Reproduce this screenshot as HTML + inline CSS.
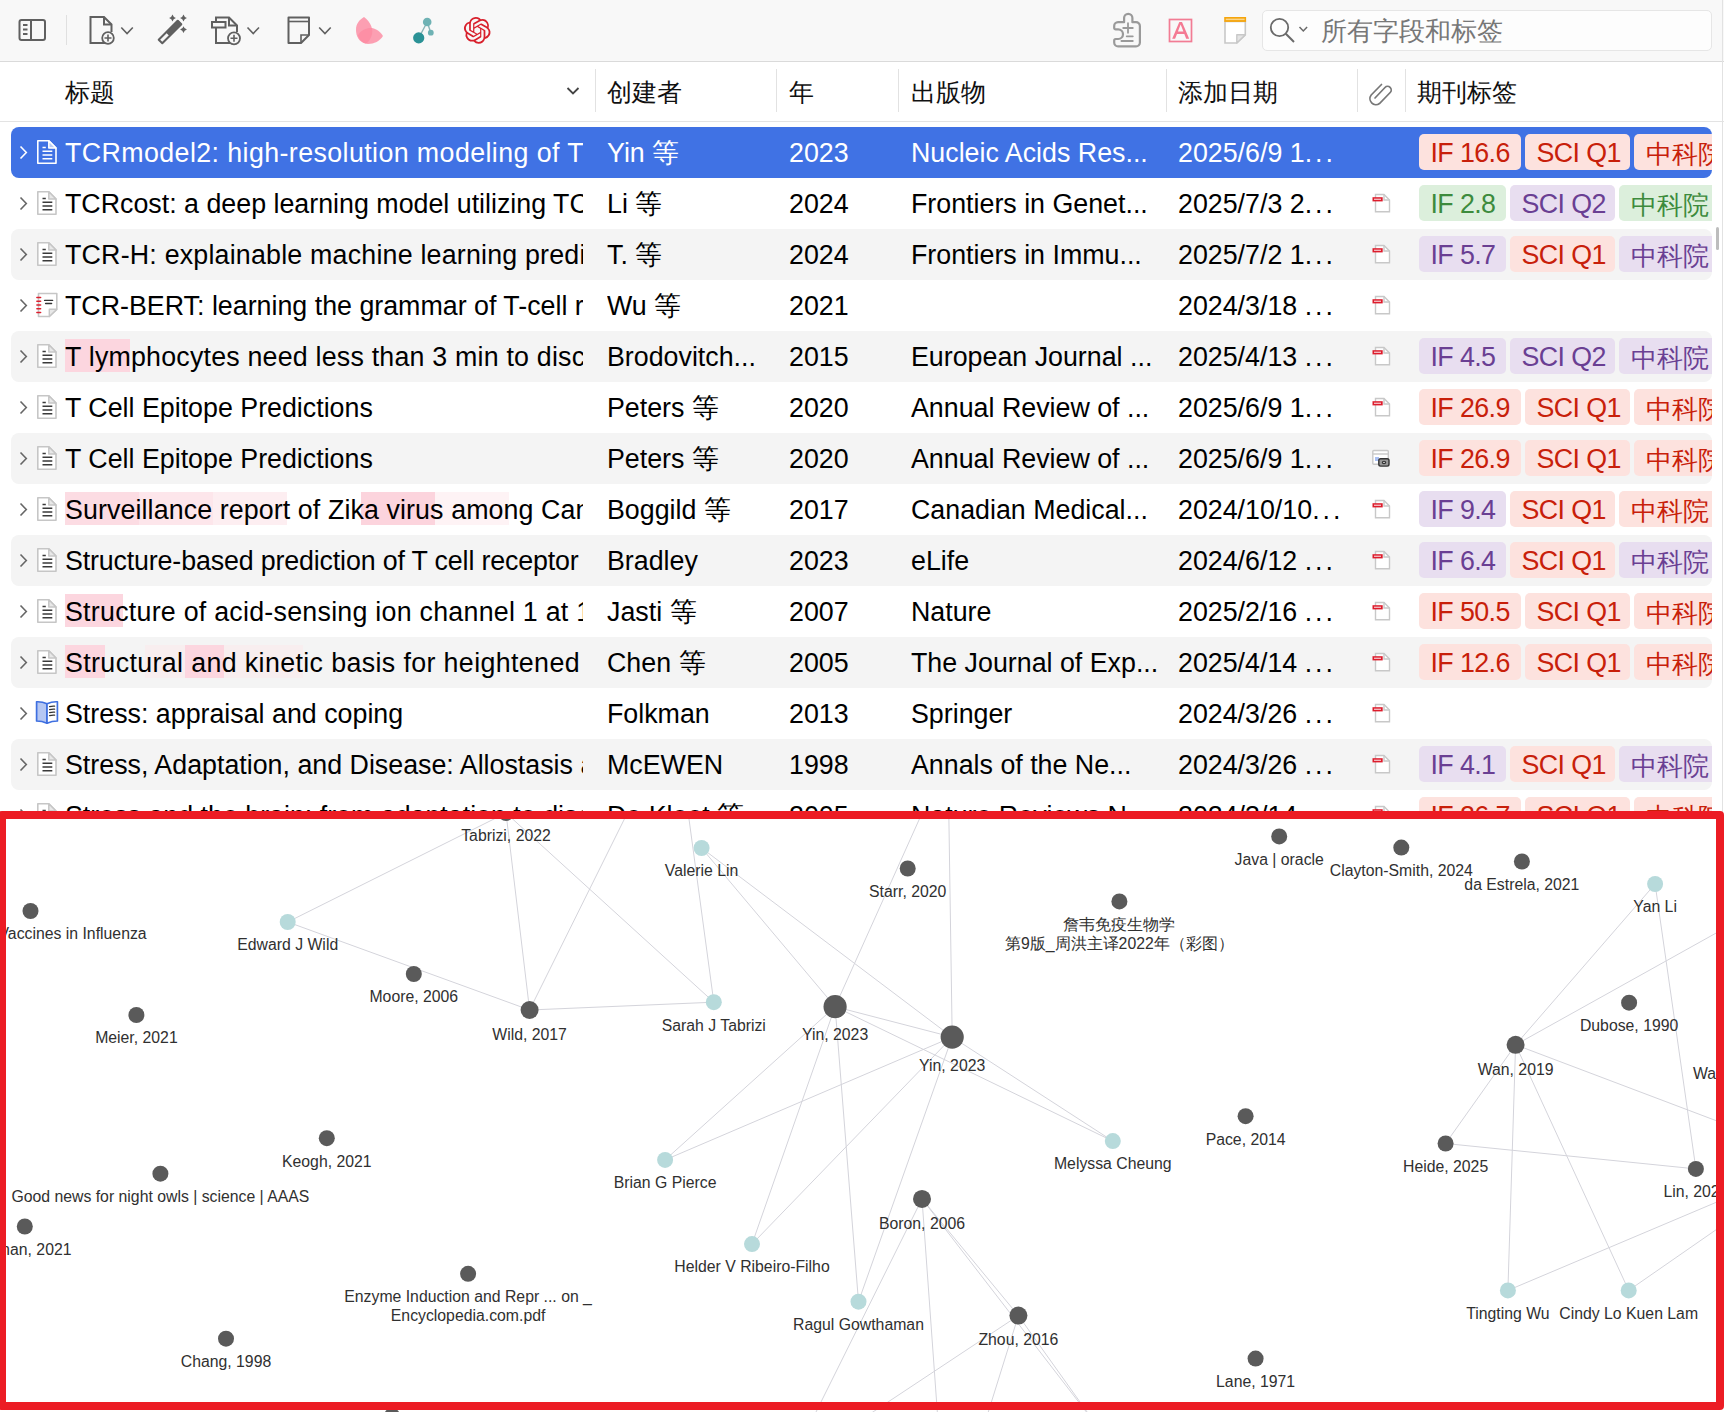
<!DOCTYPE html><html><head><meta charset="utf-8"><style>
*{margin:0;padding:0;box-sizing:border-box}
html,body{width:1724px;height:1412px;overflow:hidden;background:#fff;font-family:"Liberation Sans",sans-serif;color:#000}
.abs{position:absolute}
#tb{position:absolute;left:0;top:0;width:1724px;height:62px;background:#f8f8f8;border-bottom:1px solid #dadada}
#hd{position:absolute;left:0;top:62px;width:1724px;height:60px;background:#fff;border-bottom:1px solid #e3e3e3}
.hcol{position:absolute;top:0;height:59px;line-height:61px;font-size:25px;color:#111;white-space:nowrap}
.hdiv{position:absolute;top:7px;width:1px;height:43px;background:#e2e2e2}
.row{position:absolute;left:11px;width:1701px;height:51px;border-radius:8px}
.row.alt{background:#f4f4f4}
.row.sel{background:#4072e4;color:#fff}
.c{position:absolute;top:0;height:51px;line-height:53px;font-size:26.8px;white-space:nowrap;overflow:hidden}
.tag{position:absolute;top:7px;height:36px;line-height:38.5px;border-radius:5px;font-size:26.8px;padding-left:11.5px;white-space:nowrap;overflow:hidden;letter-spacing:-0.6px}
.tr{background:#fde2de;color:#c8200a}
.tg{background:#dcefdc;color:#3d8b3d}
.tp{background:#e8def0;color:#6a3f93}
.hl{position:absolute}
#graph{position:absolute;left:6px;top:819px;width:1718px;height:593px;background:#fff;overflow:hidden}
.lb{position:absolute;font-size:15.8px;color:#303030;white-space:nowrap;line-height:19px;text-align:center}
</style></head><body>
<div id="tb"></div>
<svg class="abs" style="left:0;top:0" width="1724" height="61" viewBox="0 0 1724 61">
<rect x="19.5" y="20" width="25.5" height="20" rx="2" fill="none" stroke="#606060" stroke-width="2"/>
<line x1="31" y1="20" x2="31" y2="40" stroke="#606060" stroke-width="2"/>
<line x1="23" y1="25" x2="27.5" y2="25" stroke="#606060" stroke-width="2"/>
<line x1="23" y1="29.5" x2="27.5" y2="29.5" stroke="#606060" stroke-width="2"/>
<line x1="23" y1="34" x2="27.5" y2="34" stroke="#606060" stroke-width="2"/>
<line x1="66.5" y1="15" x2="66.5" y2="45" stroke="#e0e0e0" stroke-width="1"/>
<path d="M106 43 H90.5 V17 H104 L111.5 24.5 V32" fill="none" stroke="#606060" stroke-width="2"/>
<path d="M104 17 V24.5 H111.5" fill="none" stroke="#606060" stroke-width="2"/>
<circle cx="108" cy="38" r="5.8" fill="#f8f8f8" stroke="#606060" stroke-width="1.8"/>
<path d="M108 34.5 V41.5 M104.5 38 H111.5" stroke="#606060" stroke-width="1.6"/>
<path d="M121.3 27.5 L127.05 33.5 L132.8 27.5" fill="none" stroke="#606060" stroke-width="1.6"/>
<path d="M158.7 39.7 L177.7 20.7 L181.3 24.3 L162.3 43.3 Z" fill="none" stroke="#606060" stroke-width="2" stroke-linejoin="round"/>
<path d="M166.3 32.1 L177.7 20.7 L181.3 24.3 L169.9 35.7 Z" fill="#606060" stroke="#606060" stroke-width="1.2" stroke-linejoin="round"/>
<path d="M172.5 14.6 Q173.248 17.252 175.9 18 Q173.248 18.748 172.5 21.4 Q171.752 18.748 169.1 18 Q171.752 17.252 172.5 14.6 Z" fill="#606060"/>
<path d="M183.5 14.6 Q184.248 17.252 186.9 18 Q184.248 18.748 183.5 21.4 Q182.752 18.748 180.1 18 Q182.752 17.252 183.5 14.6 Z" fill="#606060"/>
<path d="M183.5 26.200000000000003 Q184.248 28.852 186.9 29.6 Q184.248 30.348000000000003 183.5 33.0 Q182.752 30.348000000000003 180.1 29.6 Q182.752 28.852 183.5 26.200000000000003 Z" fill="#606060"/>
<path d="M230 43 H216 V17.5 H229 L237 25.5 V32" fill="none" stroke="#606060" stroke-width="2"/>
<path d="M229 17.5 V25.5 H237" fill="none" stroke="#606060" stroke-width="2"/>
<rect x="212" y="22" width="13.5" height="5.5" fill="#f8f8f8" stroke="#606060" stroke-width="2"/>
<circle cx="234" cy="38.3" r="6" fill="#f8f8f8" stroke="#606060" stroke-width="1.8"/>
<path d="M234 34.8 V41.8 M230.5 38.3 H237.5" stroke="#606060" stroke-width="1.6"/>
<path d="M247.5 27.5 L253.25 33.5 L259.0 27.5" fill="none" stroke="#606060" stroke-width="1.6"/>
<path d="M288.5 17.5 H309 V35 L301 43 H288.5 Z" fill="none" stroke="#606060" stroke-width="2" stroke-linejoin="round"/>
<line x1="288.5" y1="21.5" x2="309" y2="21.5" stroke="#606060" stroke-width="1.6"/>
<path d="M301 43 V35 H309" fill="none" stroke="#606060" stroke-width="1.6"/>
<path d="M319.2 27.5 L324.95 33.5 L330.7 27.5" fill="none" stroke="#606060" stroke-width="1.6"/>
<path d="M364 17 C371 22 374 30 371.5 36 C370 40 368 43 365.5 43.5 C359 42 356 36 356 30 C356 24 359 20 364 17 Z" fill="#fc8ba2" opacity="0.82"/>
<path d="M358 35.5 C361 29 368 27.5 372 28 C377 29 381 32.5 383 36 C380 41 374 44 368 44 C363 44 359.5 40 358 35.5 Z" fill="#fc8ba2" opacity="0.82"/>
<line x1="419" y1="37.5" x2="427.2" y2="22" stroke="#8ab4b6" stroke-width="1.4"/>
<line x1="427.2" y1="22" x2="430.8" y2="32.7" stroke="#8ab4b6" stroke-width="1.4"/>
<circle cx="427.2" cy="22" r="4.3" fill="#6fb2b4"/>
<circle cx="430.8" cy="32.7" r="2.9" fill="#6fb2b4"/>
<circle cx="418.7" cy="37.9" r="5.6" fill="#2b9296"/>
<path transform="translate(463.9 17) scale(1.11)" fill="#d8202c" d="M22.2819 9.8211a5.9847 5.9847 0 0 0-.5157-4.9108 6.0462 6.0462 0 0 0-6.5098-2.9A6.0651 6.0651 0 0 0 4.9807 4.1818a5.9847 5.9847 0 0 0-3.9977 2.9 6.0462 6.0462 0 0 0 .7427 7.0966 5.98 5.98 0 0 0 .511 4.9107 6.051 6.051 0 0 0 6.5146 2.9001A5.9847 5.9847 0 0 0 13.2599 24a6.0557 6.0557 0 0 0 5.7718-4.2058 5.9894 5.9894 0 0 0 3.9977-2.9001 6.0557 6.0557 0 0 0-.7475-7.0729zm-9.022 12.6081a4.4755 4.4755 0 0 1-2.8764-1.0408l.1419-.0804 4.7783-2.7582a.7948.7948 0 0 0 .3927-.6813v-6.7369l2.02 1.1686a.071.071 0 0 1 .038.052v5.5826a4.504 4.504 0 0 1-4.4945 4.4944zm-9.6607-4.1254a4.4708 4.4708 0 0 1-.5346-3.0137l.142.0852 4.783 2.7582a.7712.7712 0 0 0 .7806 0l5.8428-3.3685v2.3324a.0804.0804 0 0 1-.0332.0615L9.74 19.9502a4.4992 4.4992 0 0 1-6.1408-1.6464zM2.3408 7.8956a4.485 4.485 0 0 1 2.3655-1.9728V11.6a.7664.7664 0 0 0 .3879.6765l5.8144 3.3543-2.0201 1.1685a.0757.0757 0 0 1-.071 0l-4.8303-2.7865A4.504 4.504 0 0 1 2.3408 7.872zm16.5963 3.8558L13.1038 8.364 15.1192 7.2a.0757.0757 0 0 1 .071 0l4.8303 2.7913a4.4944 4.4944 0 0 1-.6765 8.1042v-5.6772a.79.79 0 0 0-.407-.667zm2.0107-3.0231l-.142-.0852-4.7735-2.7818a.7759.7759 0 0 0-.7854 0L9.409 9.2297V6.8974a.0662.0662 0 0 1 .0284-.0615l4.8303-2.7866a4.4992 4.4992 0 0 1 6.6802 4.66zM8.3065 12.863l-2.02-1.1638a.0804.0804 0 0 1-.038-.0567V6.0742a4.4992 4.4992 0 0 1 7.3757-3.4537l-.142.0805L8.704 5.459a.7948.7948 0 0 0-.3927.6813zm1.0976-2.3654l2.602-1.4998 2.6069 1.4998v2.9994l-2.5974 1.4997-2.6067-1.4997Z"/>
<path d="M1118 22.2 H1124.1 V18 A4.15 4.15 0 0 1 1132.4 18 V22.2 H1136 A3.9 3.9 0 0 1 1139.9 26.1 V42.4 A3.9 3.9 0 0 1 1136 46.3 H1118.1 A3.9 3.9 0 0 1 1114.2 42.4 V40.5 A1.5 1.5 0 0 1 1115.7 39 H1118.2 A4.8 4.8 0 0 0 1118.2 29.4 H1115.7 A1.5 1.5 0 0 1 1114.2 27.9 V26.1 A3.9 3.9 0 0 1 1118 22.2 Z" fill="none" stroke="#9a9a9a" stroke-width="2.2" stroke-linejoin="round"/>
<path d="M1128 23.2 V32.8 M1123.2 28 H1132.8 M1126.7 36.3 H1132.8 M1121.4 41 H1132.8" stroke="#9a9a9a" stroke-width="1.8" stroke-linecap="round"/>
<rect x="1169.5" y="19.5" width="22" height="22" fill="none" stroke="#f27c94" stroke-width="1.7"/>
<path fill-rule="evenodd" fill="#f47a93" d="M1172.2 38.8 L1179.3 22 H1182 L1189.2 38.8 H1186.2 L1184.3 34 H1177 L1175.1 38.8 Z M1177.9 31.4 H1183.4 L1180.65 24.6 Z"/>
<path d="M1225 21.5 H1245.3 V34.8 L1236.8 43 H1225 Z" fill="#fff" stroke="#c8c8c8" stroke-width="1.6"/>
<rect x="1224.2" y="17" width="21.9" height="4.9" fill="#f5a50d"/>
<rect x="1225.8" y="18.6" width="18.8" height="1.5" fill="#fad58a"/>
<path d="M1236.8 43 V34.8 H1245.3 Z" fill="#e4e4e4" stroke="#c8c8c8" stroke-width="1.4" stroke-linejoin="round"/>
</svg>
<div class="abs" style="left:1262px;top:9.5px;width:450px;height:41px;border:1px solid #e6e6e6;border-radius:5px;background:#fdfdfd"></div>
<svg class="abs" style="left:1260px;top:10px" width="60" height="40" viewBox="1260 10 60 40">
<circle cx="1279.5" cy="27.5" r="8.7" fill="none" stroke="#6a6a6a" stroke-width="1.8"/>
<line x1="1285.8" y1="33.8" x2="1294" y2="42" stroke="#6a6a6a" stroke-width="2"/>
<path d="M1299.5 27 L1303.3 31 L1307.1 27" fill="none" stroke="#6a6a6a" stroke-width="1.5"/>
</svg>
<div class="abs" style="left:1321px;top:11px;height:40px;line-height:40px;font-size:25.6px;color:#777;white-space:nowrap">所有字段和标签</div>
<div id="hd">
<div class="hcol" style="left:65px">标题</div>
<div class="hcol" style="left:607px">创建者</div>
<div class="hcol" style="left:789px">年</div>
<div class="hcol" style="left:911px">出版物</div>
<div class="hcol" style="left:1178px">添加日期</div>
<div class="hcol" style="left:1417px">期刊标签</div>
<div class="hdiv" style="left:595px"></div>
<div class="hdiv" style="left:776px"></div>
<div class="hdiv" style="left:898px"></div>
<div class="hdiv" style="left:1166px"></div>
<div class="hdiv" style="left:1357px"></div>
<div class="hdiv" style="left:1405px"></div>
</div>
<svg class="abs" style="left:560px;top:80px" width="40" height="30"><path d="M7.5 8 L13 13.5 L18.5 8" fill="none" stroke="#444" stroke-width="1.8"/></svg>
<svg class="abs" style="left:1365px;top:78px" width="32" height="32" viewBox="0 0 32 32"><path d="M9 20 L19 9.5 A3.6 3.6 0 0 1 24.2 14.5 L13.5 25.5 A6 6 0 0 1 5.2 17 L15.5 6.5" fill="none" stroke="#777" stroke-width="1.7" stroke-linecap="round" transform="translate(1 0)"/></svg>
<div class="row sel" style="top:127px"></div>
<svg class="abs" style="left:17px;top:144px" width="14" height="18"><path d="M3.5 2.5 L9.3 8.5 L3.5 14.5" fill="none" stroke="#fff" stroke-width="1.6"/></svg>
<svg class="abs" style="left:36px;top:139px" width="22" height="26" viewBox="0 0 22 26"><path d="M1.8 1.8 H12.8 L20 9 V24.2 H1.8 Z" fill="none" stroke="#fff" stroke-width="1.6" stroke-linejoin="round"/><path d="M12.8 1.8 V9 H20 Z" fill="#b9ccf5" stroke="#fff" stroke-width="1.5" stroke-linejoin="round"/><path d="M6.5 8.6 H9.8 M6.5 12.3 H16.3 M6.5 16 H16.3 M6.5 19.7 H16.3" stroke="#fff" stroke-width="1.5"/></svg>
<div class="c" style="left:65px;top:127px;width:518px;color:#fff;letter-spacing:0.4px">TCRmodel2: high-resolution modeling of T</div>
<div class="c" style="left:607px;top:127px;width:165px;color:#fff">Yin 等</div>
<div class="c" style="left:789px;top:127px;width:105px;color:#fff">2023</div>
<div class="c" style="left:911px;top:127px;width:250px;color:#fff">Nucleic Acids Res...</div>
<div class="c" style="left:1178px;top:127px;width:175px;color:#fff">2025/6/9 1<span style="letter-spacing:3px">...</span></div>

<div class="abs" style="left:1419px;top:127px;width:293px;height:51px;overflow:hidden">
<div class="tag tr" style="left:0px;width:102px">IF 16.6</div>
<div class="tag tr" style="left:106px;width:105px">SCI Q1</div>
<div class="tag tr" style="left:215px;width:100px;font-size:25.8px;line-height:40.5px;letter-spacing:0">中科院</div>
</div>
<div class="row" style="top:178px"></div>
<svg class="abs" style="left:17px;top:195px" width="14" height="18"><path d="M3.5 2.5 L9.3 8.5 L3.5 14.5" fill="none" stroke="#666" stroke-width="1.6"/></svg>
<svg class="abs" style="left:36px;top:190px" width="22" height="26" viewBox="0 0 22 26"><path d="M1.8 1.8 H12.8 L20 9 V24.2 H1.8 Z" fill="#fff" stroke="#c6c6c6" stroke-width="1.6" stroke-linejoin="round"/><path d="M12.8 1.8 V9 H20 Z" fill="#e8e8e8" stroke="#c6c6c6" stroke-width="1.5" stroke-linejoin="round"/><path d="M6.5 8.6 H9.8 M6.5 12.3 H16.3 M6.5 16 H16.3 M6.5 19.7 H16.3" stroke="#3a3a3a" stroke-width="1.5"/></svg>
<div class="c" style="left:65px;top:178px;width:518px;color:#000;letter-spacing:0px">TCRcost: a deep learning model utilizing TC</div>
<div class="c" style="left:607px;top:178px;width:165px;color:#000">Li 等</div>
<div class="c" style="left:789px;top:178px;width:105px;color:#000">2024</div>
<div class="c" style="left:911px;top:178px;width:250px;color:#000">Frontiers in Genet...</div>
<div class="c" style="left:1178px;top:178px;width:175px;color:#000">2025/7/3 2<span style="letter-spacing:3px">...</span></div>
<svg class="abs" style="left:1370px;top:192px" width="24" height="24" viewBox="0 0 24 24"><path d="M5.5 2.5 H14 L19.5 8 V19.8 H5.5 Z" fill="#fff" stroke="#c8c8c8" stroke-width="1.4"/><path d="M14 2.5 V8 H19.5" fill="none" stroke="#c8c8c8" stroke-width="1.4"/><rect x="2.5" y="5.2" width="10.2" height="4.2" fill="#dd1c2c"/><rect x="4" y="6.6" width="7" height="1.4" fill="#f3b4ba"/></svg>
<div class="abs" style="left:1419px;top:178px;width:293px;height:51px;overflow:hidden">
<div class="tag tg" style="left:0px;width:87px">IF 2.8</div>
<div class="tag tp" style="left:91px;width:105px">SCI Q2</div>
<div class="tag tg" style="left:200px;width:100px;font-size:25.8px;line-height:40.5px;letter-spacing:0">中科院</div>
</div>
<div class="row alt" style="top:229px"></div>
<svg class="abs" style="left:17px;top:246px" width="14" height="18"><path d="M3.5 2.5 L9.3 8.5 L3.5 14.5" fill="none" stroke="#666" stroke-width="1.6"/></svg>
<svg class="abs" style="left:36px;top:241px" width="22" height="26" viewBox="0 0 22 26"><path d="M1.8 1.8 H12.8 L20 9 V24.2 H1.8 Z" fill="#fff" stroke="#c6c6c6" stroke-width="1.6" stroke-linejoin="round"/><path d="M12.8 1.8 V9 H20 Z" fill="#e8e8e8" stroke="#c6c6c6" stroke-width="1.5" stroke-linejoin="round"/><path d="M6.5 8.6 H9.8 M6.5 12.3 H16.3 M6.5 16 H16.3 M6.5 19.7 H16.3" stroke="#3a3a3a" stroke-width="1.5"/></svg>
<div class="c" style="left:65px;top:229px;width:518px;color:#000;letter-spacing:0.2px">TCR-H: explainable machine learning predi</div>
<div class="c" style="left:607px;top:229px;width:165px;color:#000">T. 等</div>
<div class="c" style="left:789px;top:229px;width:105px;color:#000">2024</div>
<div class="c" style="left:911px;top:229px;width:250px;color:#000">Frontiers in Immu...</div>
<div class="c" style="left:1178px;top:229px;width:175px;color:#000">2025/7/2 1<span style="letter-spacing:3px">...</span></div>
<svg class="abs" style="left:1370px;top:243px" width="24" height="24" viewBox="0 0 24 24"><path d="M5.5 2.5 H14 L19.5 8 V19.8 H5.5 Z" fill="#fff" stroke="#c8c8c8" stroke-width="1.4"/><path d="M14 2.5 V8 H19.5" fill="none" stroke="#c8c8c8" stroke-width="1.4"/><rect x="2.5" y="5.2" width="10.2" height="4.2" fill="#dd1c2c"/><rect x="4" y="6.6" width="7" height="1.4" fill="#f3b4ba"/></svg>
<div class="abs" style="left:1419px;top:229px;width:293px;height:51px;overflow:hidden">
<div class="tag tp" style="left:0px;width:87px">IF 5.7</div>
<div class="tag tr" style="left:91px;width:105px">SCI Q1</div>
<div class="tag tp" style="left:200px;width:100px;font-size:25.8px;line-height:40.5px;letter-spacing:0">中科院</div>
</div>
<div class="row" style="top:280px"></div>
<svg class="abs" style="left:17px;top:297px" width="14" height="18"><path d="M3.5 2.5 L9.3 8.5 L3.5 14.5" fill="none" stroke="#666" stroke-width="1.6"/></svg>
<svg class="abs" style="left:36px;top:292px" width="22" height="26" viewBox="0 0 22 26"><path d="M2.5 1.5 H20.8 V17.3 L13.3 24.5 H2.5 Z" fill="#fff" stroke="#c6c6c6" stroke-width="1.6" stroke-linejoin="round"/><path d="M13.3 24.5 V17.3 H20.8 Z" fill="#e8e8e8" stroke="#c6c6c6" stroke-width="1.4" stroke-linejoin="round"/><path d="M0.9 5.5 H4.6" stroke="#dc1f2e" stroke-width="1.6" stroke-linecap="round"/><path d="M0.9 9.25 H4.6" stroke="#dc1f2e" stroke-width="1.6" stroke-linecap="round"/><path d="M0.9 13 H4.6" stroke="#dc1f2e" stroke-width="1.6" stroke-linecap="round"/><path d="M0.9 16.75 H4.6" stroke="#dc1f2e" stroke-width="1.6" stroke-linecap="round"/><path d="M0.9 20.5 H4.6" stroke="#dc1f2e" stroke-width="1.6" stroke-linecap="round"/><path d="M8.6 8.4 H16.6 M9.6 11.5 H15.6" stroke="#333" stroke-width="1.4" stroke-linecap="round"/></svg>
<div class="c" style="left:65px;top:280px;width:518px;color:#000;letter-spacing:0px">TCR-BERT: learning the grammar of T-cell r</div>
<div class="c" style="left:607px;top:280px;width:165px;color:#000">Wu 等</div>
<div class="c" style="left:789px;top:280px;width:105px;color:#000">2021</div>
<div class="c" style="left:911px;top:280px;width:250px;color:#000"></div>
<div class="c" style="left:1178px;top:280px;width:175px;color:#000">2024/3/18 <span style="letter-spacing:3px">...</span></div>
<svg class="abs" style="left:1370px;top:294px" width="24" height="24" viewBox="0 0 24 24"><path d="M5.5 2.5 H14 L19.5 8 V19.8 H5.5 Z" fill="#fff" stroke="#c8c8c8" stroke-width="1.4"/><path d="M14 2.5 V8 H19.5" fill="none" stroke="#c8c8c8" stroke-width="1.4"/><rect x="2.5" y="5.2" width="10.2" height="4.2" fill="#dd1c2c"/><rect x="4" y="6.6" width="7" height="1.4" fill="#f3b4ba"/></svg>
<div class="abs" style="left:1419px;top:280px;width:293px;height:51px;overflow:hidden">
</div>
<div class="row alt" style="top:331px"></div>
<div class="hl" style="left:65px;top:339px;width:65px;height:33px;background:#fcd6df"></div>
<svg class="abs" style="left:17px;top:348px" width="14" height="18"><path d="M3.5 2.5 L9.3 8.5 L3.5 14.5" fill="none" stroke="#666" stroke-width="1.6"/></svg>
<svg class="abs" style="left:36px;top:343px" width="22" height="26" viewBox="0 0 22 26"><path d="M1.8 1.8 H12.8 L20 9 V24.2 H1.8 Z" fill="#fff" stroke="#c6c6c6" stroke-width="1.6" stroke-linejoin="round"/><path d="M12.8 1.8 V9 H20 Z" fill="#e8e8e8" stroke="#c6c6c6" stroke-width="1.5" stroke-linejoin="round"/><path d="M6.5 8.6 H9.8 M6.5 12.3 H16.3 M6.5 16 H16.3 M6.5 19.7 H16.3" stroke="#3a3a3a" stroke-width="1.5"/></svg>
<div class="c" style="left:65px;top:331px;width:518px;color:#000;letter-spacing:0.2px">T lymphocytes need less than 3 min to disc</div>
<div class="c" style="left:607px;top:331px;width:165px;color:#000">Brodovitch...</div>
<div class="c" style="left:789px;top:331px;width:105px;color:#000">2015</div>
<div class="c" style="left:911px;top:331px;width:250px;color:#000">European Journal ...</div>
<div class="c" style="left:1178px;top:331px;width:175px;color:#000">2025/4/13 <span style="letter-spacing:3px">...</span></div>
<svg class="abs" style="left:1370px;top:345px" width="24" height="24" viewBox="0 0 24 24"><path d="M5.5 2.5 H14 L19.5 8 V19.8 H5.5 Z" fill="#fff" stroke="#c8c8c8" stroke-width="1.4"/><path d="M14 2.5 V8 H19.5" fill="none" stroke="#c8c8c8" stroke-width="1.4"/><rect x="2.5" y="5.2" width="10.2" height="4.2" fill="#dd1c2c"/><rect x="4" y="6.6" width="7" height="1.4" fill="#f3b4ba"/></svg>
<div class="abs" style="left:1419px;top:331px;width:293px;height:51px;overflow:hidden">
<div class="tag tp" style="left:0px;width:87px">IF 4.5</div>
<div class="tag tp" style="left:91px;width:105px">SCI Q2</div>
<div class="tag tp" style="left:200px;width:100px;font-size:25.8px;line-height:40.5px;letter-spacing:0">中科院</div>
</div>
<div class="row" style="top:382px"></div>
<svg class="abs" style="left:17px;top:399px" width="14" height="18"><path d="M3.5 2.5 L9.3 8.5 L3.5 14.5" fill="none" stroke="#666" stroke-width="1.6"/></svg>
<svg class="abs" style="left:36px;top:394px" width="22" height="26" viewBox="0 0 22 26"><path d="M1.8 1.8 H12.8 L20 9 V24.2 H1.8 Z" fill="#fff" stroke="#c6c6c6" stroke-width="1.6" stroke-linejoin="round"/><path d="M12.8 1.8 V9 H20 Z" fill="#e8e8e8" stroke="#c6c6c6" stroke-width="1.5" stroke-linejoin="round"/><path d="M6.5 8.6 H9.8 M6.5 12.3 H16.3 M6.5 16 H16.3 M6.5 19.7 H16.3" stroke="#3a3a3a" stroke-width="1.5"/></svg>
<div class="c" style="left:65px;top:382px;width:518px;color:#000;letter-spacing:0px">T Cell Epitope Predictions</div>
<div class="c" style="left:607px;top:382px;width:165px;color:#000">Peters 等</div>
<div class="c" style="left:789px;top:382px;width:105px;color:#000">2020</div>
<div class="c" style="left:911px;top:382px;width:250px;color:#000">Annual Review of ...</div>
<div class="c" style="left:1178px;top:382px;width:175px;color:#000">2025/6/9 1<span style="letter-spacing:3px">...</span></div>
<svg class="abs" style="left:1370px;top:396px" width="24" height="24" viewBox="0 0 24 24"><path d="M5.5 2.5 H14 L19.5 8 V19.8 H5.5 Z" fill="#fff" stroke="#c8c8c8" stroke-width="1.4"/><path d="M14 2.5 V8 H19.5" fill="none" stroke="#c8c8c8" stroke-width="1.4"/><rect x="2.5" y="5.2" width="10.2" height="4.2" fill="#dd1c2c"/><rect x="4" y="6.6" width="7" height="1.4" fill="#f3b4ba"/></svg>
<div class="abs" style="left:1419px;top:382px;width:293px;height:51px;overflow:hidden">
<div class="tag tr" style="left:0px;width:102px">IF 26.9</div>
<div class="tag tr" style="left:106px;width:105px">SCI Q1</div>
<div class="tag tr" style="left:215px;width:100px;font-size:25.8px;line-height:40.5px;letter-spacing:0">中科院</div>
</div>
<div class="row alt" style="top:433px"></div>
<svg class="abs" style="left:17px;top:450px" width="14" height="18"><path d="M3.5 2.5 L9.3 8.5 L3.5 14.5" fill="none" stroke="#666" stroke-width="1.6"/></svg>
<svg class="abs" style="left:36px;top:445px" width="22" height="26" viewBox="0 0 22 26"><path d="M1.8 1.8 H12.8 L20 9 V24.2 H1.8 Z" fill="#fff" stroke="#c6c6c6" stroke-width="1.6" stroke-linejoin="round"/><path d="M12.8 1.8 V9 H20 Z" fill="#e8e8e8" stroke="#c6c6c6" stroke-width="1.5" stroke-linejoin="round"/><path d="M6.5 8.6 H9.8 M6.5 12.3 H16.3 M6.5 16 H16.3 M6.5 19.7 H16.3" stroke="#3a3a3a" stroke-width="1.5"/></svg>
<div class="c" style="left:65px;top:433px;width:518px;color:#000;letter-spacing:0px">T Cell Epitope Predictions</div>
<div class="c" style="left:607px;top:433px;width:165px;color:#000">Peters 等</div>
<div class="c" style="left:789px;top:433px;width:105px;color:#000">2020</div>
<div class="c" style="left:911px;top:433px;width:250px;color:#000">Annual Review of ...</div>
<div class="c" style="left:1178px;top:433px;width:175px;color:#000">2025/6/9 1<span style="letter-spacing:3px">...</span></div>
<svg class="abs" style="left:1370px;top:447px" width="24" height="24" viewBox="0 0 24 24"><rect x="2.8" y="3.5" width="15.5" height="13.8" rx="1" fill="#fff" stroke="#c8c8c8" stroke-width="1.4"/><line x1="2.8" y1="7" x2="18.3" y2="7" stroke="#c8c8c8" stroke-width="1.4"/><rect x="5" y="10" width="4" height="4" fill="#a9c0f3"/><rect x="8.8" y="11.8" width="10.2" height="7.3" rx="1.8" fill="#999" stroke="#333" stroke-width="1.4"/><ellipse cx="14" cy="15.4" rx="1.7" ry="1.2" fill="#bbb" stroke="#333" stroke-width="1.1"/></svg>
<div class="abs" style="left:1419px;top:433px;width:293px;height:51px;overflow:hidden">
<div class="tag tr" style="left:0px;width:102px">IF 26.9</div>
<div class="tag tr" style="left:106px;width:105px">SCI Q1</div>
<div class="tag tr" style="left:215px;width:100px;font-size:25.8px;line-height:40.5px;letter-spacing:0">中科院</div>
</div>
<div class="row" style="top:484px"></div>
<div class="hl" style="left:65px;top:492px;width:74px;height:33px;background:#fcdce3"></div>
<div class="hl" style="left:139px;top:492px;width:74px;height:33px;background:#fde6eb"></div>
<div class="hl" style="left:213px;top:492px;width:74px;height:33px;background:#fdeef1"></div>
<div class="hl" style="left:361px;top:492px;width:74px;height:33px;background:#fcd4dd"></div>
<div class="hl" style="left:435px;top:492px;width:74px;height:33px;background:#fef3f5"></div>
<svg class="abs" style="left:17px;top:501px" width="14" height="18"><path d="M3.5 2.5 L9.3 8.5 L3.5 14.5" fill="none" stroke="#666" stroke-width="1.6"/></svg>
<svg class="abs" style="left:36px;top:496px" width="22" height="26" viewBox="0 0 22 26"><path d="M1.8 1.8 H12.8 L20 9 V24.2 H1.8 Z" fill="#fff" stroke="#c6c6c6" stroke-width="1.6" stroke-linejoin="round"/><path d="M12.8 1.8 V9 H20 Z" fill="#e8e8e8" stroke="#c6c6c6" stroke-width="1.5" stroke-linejoin="round"/><path d="M6.5 8.6 H9.8 M6.5 12.3 H16.3 M6.5 16 H16.3 M6.5 19.7 H16.3" stroke="#3a3a3a" stroke-width="1.5"/></svg>
<div class="c" style="left:65px;top:484px;width:518px;color:#000;letter-spacing:0.1px">Surveillance report of Zika virus among Canadian</div>
<div class="c" style="left:607px;top:484px;width:165px;color:#000">Boggild 等</div>
<div class="c" style="left:789px;top:484px;width:105px;color:#000">2017</div>
<div class="c" style="left:911px;top:484px;width:250px;color:#000">Canadian Medical...</div>
<div class="c" style="left:1178px;top:484px;width:175px;color:#000">2024/10/10<span style="letter-spacing:3px">...</span></div>
<svg class="abs" style="left:1370px;top:498px" width="24" height="24" viewBox="0 0 24 24"><path d="M5.5 2.5 H14 L19.5 8 V19.8 H5.5 Z" fill="#fff" stroke="#c8c8c8" stroke-width="1.4"/><path d="M14 2.5 V8 H19.5" fill="none" stroke="#c8c8c8" stroke-width="1.4"/><rect x="2.5" y="5.2" width="10.2" height="4.2" fill="#dd1c2c"/><rect x="4" y="6.6" width="7" height="1.4" fill="#f3b4ba"/></svg>
<div class="abs" style="left:1419px;top:484px;width:293px;height:51px;overflow:hidden">
<div class="tag tp" style="left:0px;width:87px">IF 9.4</div>
<div class="tag tr" style="left:91px;width:105px">SCI Q1</div>
<div class="tag tr" style="left:200px;width:100px;font-size:25.8px;line-height:40.5px;letter-spacing:0">中科院</div>
</div>
<div class="row alt" style="top:535px"></div>
<svg class="abs" style="left:17px;top:552px" width="14" height="18"><path d="M3.5 2.5 L9.3 8.5 L3.5 14.5" fill="none" stroke="#666" stroke-width="1.6"/></svg>
<svg class="abs" style="left:36px;top:547px" width="22" height="26" viewBox="0 0 22 26"><path d="M1.8 1.8 H12.8 L20 9 V24.2 H1.8 Z" fill="#fff" stroke="#c6c6c6" stroke-width="1.6" stroke-linejoin="round"/><path d="M12.8 1.8 V9 H20 Z" fill="#e8e8e8" stroke="#c6c6c6" stroke-width="1.5" stroke-linejoin="round"/><path d="M6.5 8.6 H9.8 M6.5 12.3 H16.3 M6.5 16 H16.3 M6.5 19.7 H16.3" stroke="#3a3a3a" stroke-width="1.5"/></svg>
<div class="c" style="left:65px;top:535px;width:518px;color:#000;letter-spacing:-0.15px">Structure-based prediction of T cell receptor</div>
<div class="c" style="left:607px;top:535px;width:165px;color:#000">Bradley</div>
<div class="c" style="left:789px;top:535px;width:105px;color:#000">2023</div>
<div class="c" style="left:911px;top:535px;width:250px;color:#000">eLife</div>
<div class="c" style="left:1178px;top:535px;width:175px;color:#000">2024/6/12 <span style="letter-spacing:3px">...</span></div>
<svg class="abs" style="left:1370px;top:549px" width="24" height="24" viewBox="0 0 24 24"><path d="M5.5 2.5 H14 L19.5 8 V19.8 H5.5 Z" fill="#fff" stroke="#c8c8c8" stroke-width="1.4"/><path d="M14 2.5 V8 H19.5" fill="none" stroke="#c8c8c8" stroke-width="1.4"/><rect x="2.5" y="5.2" width="10.2" height="4.2" fill="#dd1c2c"/><rect x="4" y="6.6" width="7" height="1.4" fill="#f3b4ba"/></svg>
<div class="abs" style="left:1419px;top:535px;width:293px;height:51px;overflow:hidden">
<div class="tag tp" style="left:0px;width:87px">IF 6.4</div>
<div class="tag tr" style="left:91px;width:105px">SCI Q1</div>
<div class="tag tp" style="left:200px;width:100px;font-size:25.8px;line-height:40.5px;letter-spacing:0">中科院</div>
</div>
<div class="row" style="top:586px"></div>
<div class="hl" style="left:65px;top:594px;width:58px;height:33px;background:#fcd6df"></div>
<svg class="abs" style="left:17px;top:603px" width="14" height="18"><path d="M3.5 2.5 L9.3 8.5 L3.5 14.5" fill="none" stroke="#666" stroke-width="1.6"/></svg>
<svg class="abs" style="left:36px;top:598px" width="22" height="26" viewBox="0 0 22 26"><path d="M1.8 1.8 H12.8 L20 9 V24.2 H1.8 Z" fill="#fff" stroke="#c6c6c6" stroke-width="1.6" stroke-linejoin="round"/><path d="M12.8 1.8 V9 H20 Z" fill="#e8e8e8" stroke="#c6c6c6" stroke-width="1.5" stroke-linejoin="round"/><path d="M6.5 8.6 H9.8 M6.5 12.3 H16.3 M6.5 16 H16.3 M6.5 19.7 H16.3" stroke="#3a3a3a" stroke-width="1.5"/></svg>
<div class="c" style="left:65px;top:586px;width:518px;color:#000;letter-spacing:0.25px">Structure of acid-sensing ion channel 1 at 1.9</div>
<div class="c" style="left:607px;top:586px;width:165px;color:#000">Jasti 等</div>
<div class="c" style="left:789px;top:586px;width:105px;color:#000">2007</div>
<div class="c" style="left:911px;top:586px;width:250px;color:#000">Nature</div>
<div class="c" style="left:1178px;top:586px;width:175px;color:#000">2025/2/16 <span style="letter-spacing:3px">...</span></div>
<svg class="abs" style="left:1370px;top:600px" width="24" height="24" viewBox="0 0 24 24"><path d="M5.5 2.5 H14 L19.5 8 V19.8 H5.5 Z" fill="#fff" stroke="#c8c8c8" stroke-width="1.4"/><path d="M14 2.5 V8 H19.5" fill="none" stroke="#c8c8c8" stroke-width="1.4"/><rect x="2.5" y="5.2" width="10.2" height="4.2" fill="#dd1c2c"/><rect x="4" y="6.6" width="7" height="1.4" fill="#f3b4ba"/></svg>
<div class="abs" style="left:1419px;top:586px;width:293px;height:51px;overflow:hidden">
<div class="tag tr" style="left:0px;width:102px">IF 50.5</div>
<div class="tag tr" style="left:106px;width:105px">SCI Q1</div>
<div class="tag tr" style="left:215px;width:100px;font-size:25.8px;line-height:40.5px;letter-spacing:0">中科院</div>
</div>
<div class="row alt" style="top:637px"></div>
<div class="hl" style="left:65px;top:645px;width:40px;height:33px;background:#fcd6df"></div>
<div class="hl" style="left:145px;top:645px;width:40px;height:33px;background:#f8eeef"></div>
<div class="hl" style="left:185px;top:645px;width:39px;height:33px;background:#fcd6df"></div>
<div class="hl" style="left:224px;top:645px;width:79px;height:33px;background:#f8eeef"></div>
<svg class="abs" style="left:17px;top:654px" width="14" height="18"><path d="M3.5 2.5 L9.3 8.5 L3.5 14.5" fill="none" stroke="#666" stroke-width="1.6"/></svg>
<svg class="abs" style="left:36px;top:649px" width="22" height="26" viewBox="0 0 22 26"><path d="M1.8 1.8 H12.8 L20 9 V24.2 H1.8 Z" fill="#fff" stroke="#c6c6c6" stroke-width="1.6" stroke-linejoin="round"/><path d="M12.8 1.8 V9 H20 Z" fill="#e8e8e8" stroke="#c6c6c6" stroke-width="1.5" stroke-linejoin="round"/><path d="M6.5 8.6 H9.8 M6.5 12.3 H16.3 M6.5 16 H16.3 M6.5 19.7 H16.3" stroke="#3a3a3a" stroke-width="1.5"/></svg>
<div class="c" style="left:65px;top:637px;width:518px;color:#000;letter-spacing:0.37px">Structural and kinetic basis for heightened</div>
<div class="c" style="left:607px;top:637px;width:165px;color:#000">Chen 等</div>
<div class="c" style="left:789px;top:637px;width:105px;color:#000">2005</div>
<div class="c" style="left:911px;top:637px;width:250px;color:#000">The Journal of Exp...</div>
<div class="c" style="left:1178px;top:637px;width:175px;color:#000">2025/4/14 <span style="letter-spacing:3px">...</span></div>
<svg class="abs" style="left:1370px;top:651px" width="24" height="24" viewBox="0 0 24 24"><path d="M5.5 2.5 H14 L19.5 8 V19.8 H5.5 Z" fill="#fff" stroke="#c8c8c8" stroke-width="1.4"/><path d="M14 2.5 V8 H19.5" fill="none" stroke="#c8c8c8" stroke-width="1.4"/><rect x="2.5" y="5.2" width="10.2" height="4.2" fill="#dd1c2c"/><rect x="4" y="6.6" width="7" height="1.4" fill="#f3b4ba"/></svg>
<div class="abs" style="left:1419px;top:637px;width:293px;height:51px;overflow:hidden">
<div class="tag tr" style="left:0px;width:102px">IF 12.6</div>
<div class="tag tr" style="left:106px;width:105px">SCI Q1</div>
<div class="tag tr" style="left:215px;width:100px;font-size:25.8px;line-height:40.5px;letter-spacing:0">中科院</div>
</div>
<div class="row" style="top:688px"></div>
<svg class="abs" style="left:17px;top:705px" width="14" height="18"><path d="M3.5 2.5 L9.3 8.5 L3.5 14.5" fill="none" stroke="#666" stroke-width="1.6"/></svg>
<svg class="abs" style="left:34px;top:700px" width="26" height="26" viewBox="0 0 26 26"><path d="M2.6 1.8 Q8 1.5 13 3.8 V23.2 Q8 21 2.6 21 Z" fill="#b5c7f3" stroke="#3e6fe0" stroke-width="1.7" stroke-linejoin="round"/><path d="M23.4 1.8 Q18 1.5 13 3.8 V23.2 Q18 21 23.4 21 Z" fill="#fff" stroke="#3e6fe0" stroke-width="1.7" stroke-linejoin="round"/><path d="M15.6 6.6 Q18 5.9 20.6 6.1 M15.6 9.6 Q18 8.9 20.6 9.1 M15.6 12.6 Q18 11.9 20.6 12.1 M15.6 15.6 Q18 14.9 20.6 15.1" fill="none" stroke="#333" stroke-width="1.3" stroke-linecap="round"/></svg>
<div class="c" style="left:65px;top:688px;width:518px;color:#000;letter-spacing:0px">Stress: appraisal and coping</div>
<div class="c" style="left:607px;top:688px;width:165px;color:#000">Folkman</div>
<div class="c" style="left:789px;top:688px;width:105px;color:#000">2013</div>
<div class="c" style="left:911px;top:688px;width:250px;color:#000">Springer</div>
<div class="c" style="left:1178px;top:688px;width:175px;color:#000">2024/3/26 <span style="letter-spacing:3px">...</span></div>
<svg class="abs" style="left:1370px;top:702px" width="24" height="24" viewBox="0 0 24 24"><path d="M5.5 2.5 H14 L19.5 8 V19.8 H5.5 Z" fill="#fff" stroke="#c8c8c8" stroke-width="1.4"/><path d="M14 2.5 V8 H19.5" fill="none" stroke="#c8c8c8" stroke-width="1.4"/><rect x="2.5" y="5.2" width="10.2" height="4.2" fill="#dd1c2c"/><rect x="4" y="6.6" width="7" height="1.4" fill="#f3b4ba"/></svg>
<div class="abs" style="left:1419px;top:688px;width:293px;height:51px;overflow:hidden">
</div>
<div class="row alt" style="top:739px"></div>
<svg class="abs" style="left:17px;top:756px" width="14" height="18"><path d="M3.5 2.5 L9.3 8.5 L3.5 14.5" fill="none" stroke="#666" stroke-width="1.6"/></svg>
<svg class="abs" style="left:36px;top:751px" width="22" height="26" viewBox="0 0 22 26"><path d="M1.8 1.8 H12.8 L20 9 V24.2 H1.8 Z" fill="#fff" stroke="#c6c6c6" stroke-width="1.6" stroke-linejoin="round"/><path d="M12.8 1.8 V9 H20 Z" fill="#e8e8e8" stroke="#c6c6c6" stroke-width="1.5" stroke-linejoin="round"/><path d="M6.5 8.6 H9.8 M6.5 12.3 H16.3 M6.5 16 H16.3 M6.5 19.7 H16.3" stroke="#3a3a3a" stroke-width="1.5"/></svg>
<div class="c" style="left:65px;top:739px;width:518px;color:#000;letter-spacing:0px">Stress, Adaptation, and Disease: Allostasis and</div>
<div class="c" style="left:607px;top:739px;width:165px;color:#000">McEWEN</div>
<div class="c" style="left:789px;top:739px;width:105px;color:#000">1998</div>
<div class="c" style="left:911px;top:739px;width:250px;color:#000">Annals of the Ne...</div>
<div class="c" style="left:1178px;top:739px;width:175px;color:#000">2024/3/26 <span style="letter-spacing:3px">...</span></div>
<svg class="abs" style="left:1370px;top:753px" width="24" height="24" viewBox="0 0 24 24"><path d="M5.5 2.5 H14 L19.5 8 V19.8 H5.5 Z" fill="#fff" stroke="#c8c8c8" stroke-width="1.4"/><path d="M14 2.5 V8 H19.5" fill="none" stroke="#c8c8c8" stroke-width="1.4"/><rect x="2.5" y="5.2" width="10.2" height="4.2" fill="#dd1c2c"/><rect x="4" y="6.6" width="7" height="1.4" fill="#f3b4ba"/></svg>
<div class="abs" style="left:1419px;top:739px;width:293px;height:51px;overflow:hidden">
<div class="tag tp" style="left:0px;width:87px">IF 4.1</div>
<div class="tag tr" style="left:91px;width:105px">SCI Q1</div>
<div class="tag tp" style="left:200px;width:100px;font-size:25.8px;line-height:40.5px;letter-spacing:0">中科院</div>
</div>
<div class="row" style="top:790px"></div>
<svg class="abs" style="left:17px;top:807px" width="14" height="18"><path d="M3.5 2.5 L9.3 8.5 L3.5 14.5" fill="none" stroke="#666" stroke-width="1.6"/></svg>
<svg class="abs" style="left:36px;top:802px" width="22" height="26" viewBox="0 0 22 26"><path d="M1.8 1.8 H12.8 L20 9 V24.2 H1.8 Z" fill="#fff" stroke="#c6c6c6" stroke-width="1.6" stroke-linejoin="round"/><path d="M12.8 1.8 V9 H20 Z" fill="#e8e8e8" stroke="#c6c6c6" stroke-width="1.5" stroke-linejoin="round"/><path d="M6.5 8.6 H9.8 M6.5 12.3 H16.3 M6.5 16 H16.3 M6.5 19.7 H16.3" stroke="#3a3a3a" stroke-width="1.5"/></svg>
<div class="c" style="left:65px;top:790px;width:518px;color:#000;letter-spacing:0px">Stress and the brain: from adaptation to disease</div>
<div class="c" style="left:607px;top:790px;width:165px;color:#000">De Kloet 等</div>
<div class="c" style="left:789px;top:790px;width:105px;color:#000">2005</div>
<div class="c" style="left:911px;top:790px;width:250px;color:#000">Nature Reviews N...</div>
<div class="c" style="left:1178px;top:790px;width:175px;color:#000">2024/3/14 <span style="letter-spacing:3px">...</span></div>
<svg class="abs" style="left:1370px;top:804px" width="24" height="24" viewBox="0 0 24 24"><path d="M5.5 2.5 H14 L19.5 8 V19.8 H5.5 Z" fill="#fff" stroke="#c8c8c8" stroke-width="1.4"/><path d="M14 2.5 V8 H19.5" fill="none" stroke="#c8c8c8" stroke-width="1.4"/><rect x="2.5" y="5.2" width="10.2" height="4.2" fill="#dd1c2c"/><rect x="4" y="6.6" width="7" height="1.4" fill="#f3b4ba"/></svg>
<div class="abs" style="left:1419px;top:790px;width:293px;height:51px;overflow:hidden">
<div class="tag tr" style="left:0px;width:102px">IF 26.7</div>
<div class="tag tr" style="left:106px;width:105px">SCI Q1</div>
<div class="tag tr" style="left:215px;width:100px;font-size:25.8px;line-height:40.5px;letter-spacing:0">中科院</div>
</div>
<div class="abs" style="left:1716px;top:227px;width:3px;height:23px;background:#bdbdbd;border-radius:2px"></div>
<div class="abs" style="left:1722px;top:0px;width:1px;height:812px;background:#e2e2e2"></div>
<div id="graph">
<svg class="abs" style="left:0;top:0" width="1718" height="593" viewBox="6 819 1718 593">
<line x1="287.7" y1="922" x2="506" y2="813" stroke="#d4d4db" stroke-width="1"/>
<line x1="287.7" y1="922" x2="529.6" y2="1010" stroke="#d4d4db" stroke-width="1"/>
<line x1="506" y1="813" x2="529.6" y2="1010" stroke="#d4d4db" stroke-width="1"/>
<line x1="506" y1="813" x2="713.8" y2="1002.2" stroke="#d4d4db" stroke-width="1"/>
<line x1="529.6" y1="1010" x2="713.8" y2="1002.2" stroke="#d4d4db" stroke-width="1"/>
<line x1="701.6" y1="848" x2="835.1" y2="1006.7" stroke="#d4d4db" stroke-width="1"/>
<line x1="701.6" y1="848" x2="952.2" y2="1037.1" stroke="#d4d4db" stroke-width="1"/>
<line x1="835.1" y1="1006.7" x2="952.2" y2="1037.1" stroke="#d4d4db" stroke-width="1"/>
<line x1="835.1" y1="1006.7" x2="1112.8" y2="1141.1" stroke="#d4d4db" stroke-width="1"/>
<line x1="952.2" y1="1037.1" x2="1112.8" y2="1141.1" stroke="#d4d4db" stroke-width="1"/>
<line x1="665.1" y1="1159.9" x2="835.1" y2="1006.7" stroke="#d4d4db" stroke-width="1"/>
<line x1="665.1" y1="1159.9" x2="952.2" y2="1037.1" stroke="#d4d4db" stroke-width="1"/>
<line x1="752" y1="1244.1" x2="835.1" y2="1006.7" stroke="#d4d4db" stroke-width="1"/>
<line x1="752" y1="1244.1" x2="952.2" y2="1037.1" stroke="#d4d4db" stroke-width="1"/>
<line x1="858.5" y1="1301.7" x2="835.1" y2="1006.7" stroke="#d4d4db" stroke-width="1"/>
<line x1="858.5" y1="1301.7" x2="952.2" y2="1037.1" stroke="#d4d4db" stroke-width="1"/>
<line x1="922" y1="1198.9" x2="1018.4" y2="1315.6" stroke="#d4d4db" stroke-width="1"/>
<line x1="1515.6" y1="1044.8" x2="1655.1" y2="884" stroke="#d4d4db" stroke-width="1"/>
<line x1="1515.6" y1="1044.8" x2="1445.6" y2="1143.5" stroke="#d4d4db" stroke-width="1"/>
<line x1="1515.6" y1="1044.8" x2="1507.9" y2="1290.4" stroke="#d4d4db" stroke-width="1"/>
<line x1="1515.6" y1="1044.8" x2="1628.7" y2="1290.4" stroke="#d4d4db" stroke-width="1"/>
<line x1="1445.6" y1="1143.5" x2="1695.9" y2="1168.9" stroke="#d4d4db" stroke-width="1"/>
<line x1="1655.1" y1="884" x2="1695.9" y2="1168.9" stroke="#d4d4db" stroke-width="1"/>
<line x1="529.6" y1="1010.0" x2="814.0" y2="437.0" stroke="#d4d4db" stroke-width="1"/>
<line x1="713.8" y1="1002.2" x2="639.4" y2="452.6" stroke="#d4d4db" stroke-width="1"/>
<line x1="835.1" y1="1006.7" x2="1088.0" y2="443.6" stroke="#d4d4db" stroke-width="1"/>
<line x1="952.2" y1="1037.1" x2="942.3" y2="382.8" stroke="#d4d4db" stroke-width="1"/>
<line x1="1515.6" y1="1044.8" x2="2117.4" y2="709.4" stroke="#d4d4db" stroke-width="1"/>
<line x1="1515.6" y1="1044.8" x2="2119.8" y2="1273.4" stroke="#d4d4db" stroke-width="1"/>
<line x1="1507.9" y1="1290.4" x2="2132.2" y2="1026.4" stroke="#d4d4db" stroke-width="1"/>
<line x1="1628.7" y1="1290.4" x2="1890.6" y2="1108.6" stroke="#d4d4db" stroke-width="1"/>
<line x1="922.0" y1="1198.9" x2="619.0" y2="1808.2" stroke="#d4d4db" stroke-width="1"/>
<line x1="922.0" y1="1198.9" x2="965.8" y2="1808.2" stroke="#d4d4db" stroke-width="1"/>
<line x1="922.0" y1="1198.9" x2="1392.1" y2="1808.2" stroke="#d4d4db" stroke-width="1"/>
<line x1="1018.4" y1="1315.6" x2="1203.2" y2="1574.8" stroke="#d4d4db" stroke-width="1"/>
<line x1="1018.4" y1="1315.6" x2="627.2" y2="1574.8" stroke="#d4d4db" stroke-width="1"/>
<line x1="1018.4" y1="1315.6" x2="937.4" y2="1574.8" stroke="#d4d4db" stroke-width="1"/>
<circle cx="30.5" cy="911" r="8" fill="#5a5a5a"/>
<circle cx="287.7" cy="922" r="8" fill="#b7dadb"/>
<circle cx="136.4" cy="1015" r="8" fill="#5a5a5a"/>
<circle cx="506" cy="813" r="8" fill="#5a5a5a"/>
<circle cx="413.8" cy="974" r="8" fill="#5a5a5a"/>
<circle cx="529.6" cy="1010" r="9" fill="#5a5a5a"/>
<circle cx="701.6" cy="848" r="8" fill="#b7dadb"/>
<circle cx="907.7" cy="868.5" r="8" fill="#5a5a5a"/>
<circle cx="713.8" cy="1002.2" r="8" fill="#b7dadb"/>
<circle cx="835.1" cy="1006.7" r="11.6" fill="#5a5a5a"/>
<circle cx="952.2" cy="1037.1" r="11.6" fill="#5a5a5a"/>
<circle cx="1279.2" cy="836.4" r="8" fill="#5a5a5a"/>
<circle cx="1119.4" cy="901.4" r="8" fill="#5a5a5a"/>
<circle cx="1401.3" cy="847.6" r="8" fill="#5a5a5a"/>
<circle cx="1521.9" cy="861.5" r="8" fill="#5a5a5a"/>
<circle cx="1655.1" cy="884" r="8" fill="#b7dadb"/>
<circle cx="1629.1" cy="1002.7" r="8" fill="#5a5a5a"/>
<circle cx="1515.6" cy="1044.8" r="9" fill="#5a5a5a"/>
<circle cx="326.8" cy="1138.2" r="8" fill="#5a5a5a"/>
<circle cx="160.4" cy="1173.7" r="8" fill="#5a5a5a"/>
<circle cx="24.8" cy="1226.5" r="8" fill="#5a5a5a"/>
<circle cx="468.1" cy="1273.8" r="8" fill="#5a5a5a"/>
<circle cx="226" cy="1338.7" r="8" fill="#5a5a5a"/>
<circle cx="665.1" cy="1159.9" r="8" fill="#b7dadb"/>
<circle cx="752" cy="1244.1" r="8" fill="#b7dadb"/>
<circle cx="922" cy="1198.9" r="9" fill="#5a5a5a"/>
<circle cx="858.5" cy="1301.7" r="8" fill="#b7dadb"/>
<circle cx="1018.4" cy="1315.6" r="9" fill="#5a5a5a"/>
<circle cx="1112.8" cy="1141.1" r="8" fill="#b7dadb"/>
<circle cx="1245.6" cy="1116.2" r="8" fill="#5a5a5a"/>
<circle cx="392" cy="1416" r="8" fill="#5a5a5a"/>
<circle cx="1445.6" cy="1143.5" r="8" fill="#5a5a5a"/>
<circle cx="1695.9" cy="1168.9" r="8" fill="#5a5a5a"/>
<circle cx="1507.9" cy="1290.4" r="8" fill="#b7dadb"/>
<circle cx="1628.7" cy="1290.4" r="8" fill="#b7dadb"/>
<circle cx="1255.6" cy="1358.6" r="8" fill="#5a5a5a"/>
</svg>
<div class="lb" style="right:1577.4px;top:105.3px;text-align:right">Vaccines in Influenza</div>
<div class="lb" style="left:-18.3px;width:600px;top:116.3px">Edward J Wild</div>
<div class="lb" style="left:-169.6px;width:600px;top:209.3px">Meier, 2021</div>
<div class="lb" style="left:200.0px;width:600px;top:7.3px">Tabrizi, 2022</div>
<div class="lb" style="left:107.8px;width:600px;top:168.3px">Moore, 2006</div>
<div class="lb" style="left:223.6px;width:600px;top:205.8px">Wild, 2017</div>
<div class="lb" style="left:395.6px;width:600px;top:42.3px">Valerie Lin</div>
<div class="lb" style="left:601.7px;width:600px;top:62.8px">Starr, 2020</div>
<div class="lb" style="left:407.8px;width:600px;top:196.5px">Sarah J Tabrizi</div>
<div class="lb" style="left:529.1px;width:600px;top:206.3px">Yin, 2023</div>
<div class="lb" style="left:646.2px;width:600px;top:236.6px">Yin, 2023</div>
<div class="lb" style="left:973.2px;width:600px;top:30.7px">Java | oracle</div>
<div class="lb" style="left:813.4px;width:600px;top:95.7px">詹韦免疫生物学<br>第9版_周洪主译2022年（彩图）</div>
<div class="lb" style="left:1095.3px;width:600px;top:41.9px">Clayton-Smith, 2024</div>
<div class="lb" style="left:1215.9px;width:600px;top:55.8px">da Estrela, 2021</div>
<div class="lb" style="left:1349.1px;width:600px;top:78.3px">Yan Li</div>
<div class="lb" style="left:1323.1px;width:600px;top:197.0px">Dubose, 1990</div>
<div class="lb" style="left:1209.6px;width:600px;top:240.6px">Wan, 2019</div>
<div class="lb" style="left:20.8px;width:600px;top:332.5px">Keogh, 2021</div>
<div class="lb" style="left:-145.6px;width:600px;top:368.0px">Good news for night owls | science | AAAS</div>
<div class="lb" style="right:1652.5px;top:420.8px;text-align:right">Freeman, 2021</div>
<div class="lb" style="left:162.1px;width:600px;top:468.1px">Enzyme Induction and Repr ... on _<br>Encyclopedia.com.pdf</div>
<div class="lb" style="left:-80.0px;width:600px;top:533.0px">Chang, 1998</div>
<div class="lb" style="left:359.1px;width:600px;top:354.2px">Brian G Pierce</div>
<div class="lb" style="left:446.0px;width:600px;top:438.4px">Helder V Ribeiro-Filho</div>
<div class="lb" style="left:616.0px;width:600px;top:394.7px">Boron, 2006</div>
<div class="lb" style="left:552.5px;width:600px;top:496.0px">Ragul Gowthaman</div>
<div class="lb" style="left:712.4px;width:600px;top:511.4px">Zhou, 2016</div>
<div class="lb" style="left:806.8px;width:600px;top:335.4px">Melyssa Cheung</div>
<div class="lb" style="left:939.6px;width:600px;top:310.5px">Pace, 2014</div>
<div class="lb" style="left:1139.6px;width:600px;top:337.8px">Heide, 2025</div>
<div class="lb" style="left:1389.9px;width:600px;top:363.2px">Lin, 2022</div>
<div class="lb" style="left:1201.9px;width:600px;top:484.7px">Tingting Wu</div>
<div class="lb" style="left:1322.7px;width:600px;top:484.7px">Cindy Lo Kuen Lam</div>
<div class="lb" style="left:949.6px;width:600px;top:552.9px">Lane, 1971</div>
<div class="lb" style="left:1687px;top:244.6px;text-align:left">Wang, 2020</div>
</div>
<div class="abs" style="left:-2px;top:811px;width:1726px;height:599px;border:8px solid #ec1c24;border-radius:4px"></div>
</body></html>
